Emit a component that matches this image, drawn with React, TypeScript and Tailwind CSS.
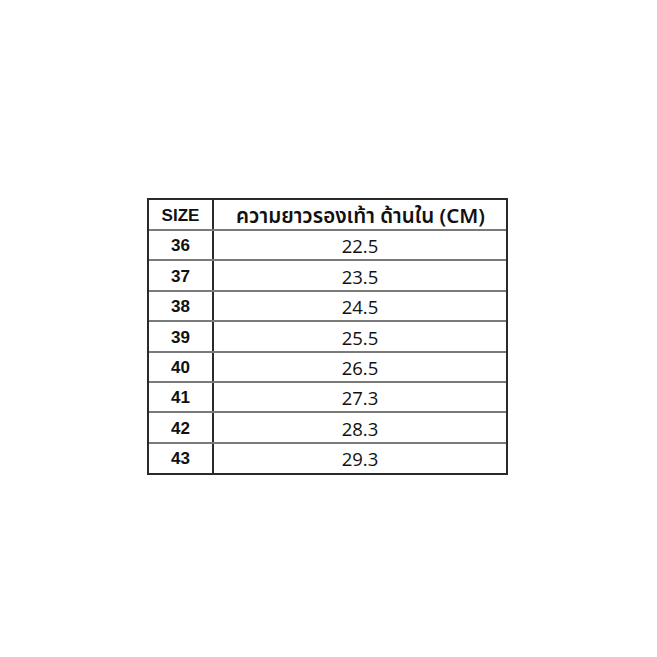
import React from "react";

const rows = [
  ["36", "22.5"],
  ["37", "23.5"],
  ["38", "24.5"],
  ["39", "25.5"],
  ["40", "26.5"],
  ["41", "27.3"],
  ["42", "28.3"],
  ["43", "29.3"],
];

export default function App() {
  return (
    <div className="w-[657px] h-[657px] bg-white flex flex-col">
      <div className="h-[198px]" />
      <div className="pl-[147px]">
        <div className="w-[361px] border-2 border-[#2a2a2a] flex flex-col">
          <div className="flex h-[31px] border-b-2 border-[#7a7a7a]">
            <div
              className="w-[65px] pt-[2px] border-r-2 border-[#2a2a2a] flex items-center justify-center text-[17px] font-bold text-[#111]"
              style={{ fontFamily: '"Liberation Sans", Arial, sans-serif' }}
            >
              SIZE
            </div>
            <div
              className="flex-1 pt-[1px] pl-[1px] flex items-center justify-center text-[20.5px] font-semibold text-[#111]"
              style={{ fontFamily: '"Noto Sans", "Noto Sans Thai", "Liberation Sans", sans-serif' }}
            >
              ความยาวรองเท้า ด้านใน (CM)
            </div>
          </div>
          {rows.map(([s, v], i) => (
            <div
              key={s}
              className={
                i < rows.length - 1
                  ? "flex h-[30.4px] border-b-2 border-[#7a7a7a]"
                  : "flex h-[29px]"
              }
            >
              <div className="w-[65px] pt-[2px] border-r-2 border-[#2a2a2a] flex items-center justify-center text-[17px] font-bold text-[#111] font-['Liberation_Sans',Arial,sans-serif]">
                {s}
              </div>
              <div className="flex-1 pt-[2px] flex items-center justify-center text-[18.5px] text-[#111] font-['Open_Sans',sans-serif]">
                {v}
              </div>
            </div>
          ))}
        </div>
      </div>
    </div>
  );
}
